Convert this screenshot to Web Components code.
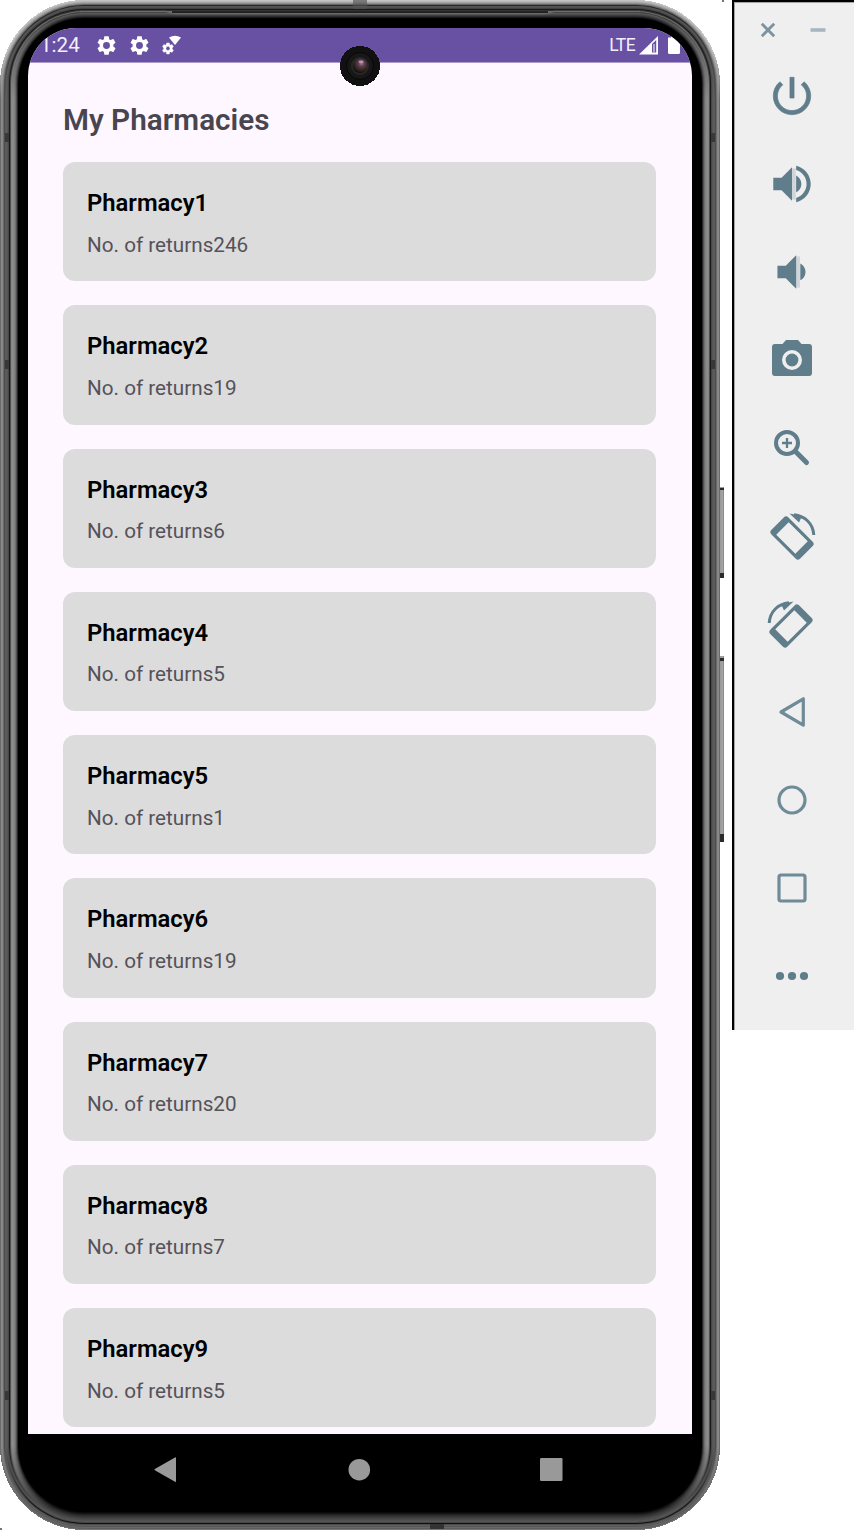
<!DOCTYPE html>
<html lang="en">
<head>
<meta charset="utf-8">
<title>My Pharmacies</title>
<style>
html,body{margin:0;background:#fff;height:1530px;overflow:hidden}
body{font-family:Roboto,"Liberation Sans",sans-serif}
</style>
</head>
<body>
<emulator-window></emulator-window>
<script>
class ShadowElement extends HTMLElement {
  connectedCallback() {
    if (!this.shadowRoot) this.attachShadow({mode: 'open'}).innerHTML = this.render();
  }
}

/* Metal rim: nested rounded rectangles from the outer edge to the black bezel. */
class DeviceFrame extends ShadowElement {
  render() {
    const bands = [
      [0,'#c4c4c4','#6c6c6c','#777777'], [1,'#b8b8b8','#8a8a8a','#5c5c5c'], [2,'#a4a4a4','#858585','#686868'],
      [3,'#8c8c8c','#6c6c6c','#555555'], [4,'#666666','#4c4c4c','#606060'], [5,'#262626','#5a5a5a','#4a4a4a'],
      [6,'#555555','#5c5c5c','#101010'], [7,'#505050','#555555','#454545'], [8,'#404040','#464646','#555555'],
      [9,'#191919','#1a1a1a','#505050'], [10,'#333333','#505050','#4a4a4a'], [11,'#6c6c6c','#858585','#444444'],
      [12,'#3a3a3a','#8c8c8c','#3c3c3c'], [13,'#585858','#898989','#343434'], [14,'#4c4c4c','#808080','#2c2c2c'],
      [15,'#3c3c3c','#707070','#202020'], [16,'#2c2c2c','#505050','#141414'], [17,'#181818','#282828','#080808'], [18,'#000','#000','#000']];
    let defs = '', rects = '';
    bands.forEach(([i,t,s,b]) => {
      const fade = i < 4 ? '.032' : '.012';
      defs += `<linearGradient id="g${i}" x1="0" y1="0" x2="0" y2="1530" gradientUnits="userSpaceOnUse"><stop offset="${fade}" stop-color="${t}"/><stop offset=".065" stop-color="${s}"/><stop offset=".945" stop-color="${s}"/><stop offset=".985" stop-color="${b}"/></linearGradient>`;
      rects += `<rect x="${i}" y="${i}" width="${720-2*i}" height="${1530-2*i}" rx="${84-i}" fill="url(#g${i})" ${i<1?'shape-rendering="crispEdges"':''}/>`;
    });
    const notch = (y) => `<path d="M5 ${y}h4v9h-4zM711 ${y}h4v9h-4z" fill="#383838"/>`;
    return `<style>:host{display:block;position:relative;width:728px;height:1530px;flex:none}
      svg{position:absolute;inset:0}.in{position:relative;padding:28px 36px 0 28px;height:1502px;box-sizing:border-box}</style>
      <svg width="728" height="1530"><defs>${defs}
      <linearGradient id="k" x1="0" y1="0" x2="1" y2="0"><stop offset="0" stop-color="#999"/><stop offset=".7" stop-color="#a5a5a5"/><stop offset="1" stop-color="#777"/></linearGradient></defs>
      ${rects}
      ${notch(133)}${notch(360)}${notch(1391)}
      <path d="M353 0h14v9h-14z" fill="#555" opacity=".65"/><path d="M430 1524h14v5h-14z" fill="#333"/>
      <path d="M80 11.5H166L175 13.5H545L554 11.5H640" stroke="#6a6a6a" stroke-width="1.4" fill="none"/>
      <path d="M172 12H548" stroke="#111" stroke-width="1.4"/>
      <path d="M720 487h4v91h-4z" fill="url(#k)"/><path d="M720 488h4v2h-4zM720 573h4v5h-4z" fill="#2b2b2b"/>
      <path d="M720 656h4v186h-4z" fill="url(#k)"/><path d="M720 658h4v3h-4zM720 834h4v8h-4z" fill="#2b2b2b"/>
      <path d="M722 0h2v2h-2zM0 1528h2v2h-2z" fill="#777"/>
      </svg><div class="in"><slot></slot></div>`;
  }
}

class StatusBar extends ShadowElement {
  render() {
    const gear = 'M19.14 12.94c.04-.3.06-.61.06-.94s-.02-.64-.07-.94l2.03-1.58c.18-.14.23-.41.12-.61l-1.92-3.32c-.12-.22-.37-.29-.59-.22l-2.39.96c-.5-.38-1.03-.7-1.62-.94L14.4 2.81c-.04-.24-.24-.41-.48-.41h-3.84c-.24 0-.43.17-.47.41L9.25 5.35c-.59.24-1.13.57-1.62.94l-2.39-.96c-.22-.08-.47 0-.59.22L2.74 8.87c-.12.21-.08.47.12.61l2.03 1.58c-.05.3-.09.63-.09.94s.02.64.07.94l-2.03 1.58c-.18.14-.23.41-.12.61l1.92 3.32c.12.22.37.29.59.22l2.39-.96c.5.38 1.03.7 1.62.94l.36 2.54c.05.24.24.41.48.41h3.84c.24 0 .44-.17.47-.41l.36-2.54c.59-.24 1.13-.56 1.62-.94l2.39.96c.22.08.47 0 .59-.22l1.92-3.32c.12-.22.07-.47-.12-.61zM12 15.6A3.6 3.6 0 1 1 12 8.4a3.6 3.6 0 0 1 0 7.2z';
    return `<style>:host{display:flex;align-items:center;height:34px;background:#6850a3;border-bottom:1px solid #ab9bcb;box-sizing:content-box;color:#f3effa}
      .t{font-size:20.6px;margin-left:12px;width:41px;white-space:nowrap}svg{display:block;fill:#fff}.g{margin-left:14px}.g+.g{margin-left:9.5px}.w{margin-left:10.5px}
      .l{margin-left:auto;font-size:17.5px;letter-spacing:-.6px;margin-right:4px}.b{margin-left:10px;margin-right:12px}</style>
      <span class="t">1:24</span>
      <svg class="g" width="23" height="23" viewBox="0 0 24 24"><path d="${gear}"/></svg>
      <svg class="g" width="23" height="23" viewBox="0 0 24 24"><path d="${gear}"/></svg>
      <svg class="w" width="21" height="21" viewBox="0 0 21 21"><path d="M8 2.5Q14-1 20 2.5L14 10Z"/><g transform="translate(0 6.5) scale(.58)"><path d="${gear}" stroke="#fff" stroke-width=".8"/></g></svg>
      <span class="l">LTE</span>
      <svg width="19" height="19" viewBox="0 0 19 19"><path fill-rule="evenodd" d="M0 18.5 19 0V18.5ZM13 8V16.5H17.2V4Z"/><path d="M14.2 8h1.6v8.5h-1.6z" fill="#c7bcdf"/></svg>
      <svg class="b" width="12" height="18" viewBox="0 0 12 18"><path d="M0 1.5H3V0H9V1.5H12V16.5Q12 18 10.5 18H1.5Q0 18 0 16.5Z"/></svg>`;
  }
}

class PharmacyCard extends ShadowElement {
  render() {
    return `<style>:host{display:block;box-sizing:border-box;height:119.25px;border-radius:12px;background:#dcdcdc;padding:26px 24px 0}
      h2{margin:0;font-size:23.8px;line-height:30px;font-weight:600;color:#000}
      p{margin:13.5px 0 0;font-size:20.7px;line-height:26px;color:#55525a}</style>
      <h2>${this.getAttribute('name')}</h2><p>No. of returns${this.getAttribute('returns')}</p>`;
  }
}

class PharmacyList extends ShadowElement {
  render() {
    const counts = [246, 19, 6, 5, 1, 19, 20, 7, 5];
    return `<style>:host{display:flex;flex-direction:column;flex:1;min-height:0;padding:37px 36px 0 35px;gap:24px;overflow:hidden}
      h1{margin:0 0 .1px;height:38px;line-height:40px;font-size:29.7px;font-weight:600;color:#49454f}
      pharmacy-card{flex:none}</style>
      <h1>My Pharmacies</h1>${counts.map((n,i)=>`<pharmacy-card name="Pharmacy${i+1}" returns="${n}"></pharmacy-card>`).join('')}`;
  }
}

class NavBar extends ShadowElement {
  render() {
    return `<style>:host{display:block;height:72px}svg{display:block;fill:#999}</style>
      <svg width="664" height="72" viewBox="28 1434 664 72"><path d="M154.8 1470.3Q154 1469.7 154.8 1469.1L175 1457.4Q176 1457 176 1458.3V1481Q176 1482.3 175 1481.7Z"/><circle cx="359.3" cy="1469.7" r="10.8"/><rect x="540" y="1458" width="22.5" height="23" rx="1.3"/></svg>`;
  }
}

class PhoneScreen extends ShadowElement {
  render() {
    return `<style>:host{display:block;position:relative}.s{height:1406px;display:flex;flex-direction:column;background:#fef7ff;border-radius:48px 48px 0 0;overflow:hidden}
      .cam{position:absolute;left:312px;top:18px}</style>
      <div class="s"><status-bar></status-bar><pharmacy-list></pharmacy-list></div><nav-bar></nav-bar>
      <svg class="cam" width="40" height="40" viewBox="0 0 40 40"><defs><radialGradient id="c" cx=".6" cy=".32" r=".65"><stop offset="0" stop-color="#a87c98"/><stop offset=".3" stop-color="#60405a"/><stop offset=".65" stop-color="#3a2a22"/><stop offset="1" stop-color="#161212"/></radialGradient></defs>
      <circle cx="20" cy="20" r="20" fill="#111" shape-rendering="crispEdges"/><circle cx="20" cy="20" r="13.5" fill="#171717" stroke="#070707"/><circle cx="20" cy="20" r="9" fill="#292929"/><circle cx="20" cy="20" r="7.3" fill="url(#c)"/><ellipse cx="21" cy="15.8" rx="2.5" ry="1.2" fill="#dcaecb" opacity=".7"/></svg>`;
  }
}

class ToolIcon extends ShadowElement {
  render() {
    const phone = '<g transform="translate(0 2)"><path transform="rotate(45)" fill-rule="evenodd" d="M-17-12H17Q20.3-12 20.3-9V9Q20.3 12 17 12H-17Q-20.3 12-20.3 9V-9Q-20.3-12-17-12ZM-13.5-8.8V8.8H13.5V-8.8Z"/><path d="M2-23.2C13-22 21-14.5 21.8-3" fill="none" stroke="#607d8b" stroke-width="3"/><path d="M-2.5-24.5 10-22 7-15.5Z"/></g>';
    const icons = {
      power: '<g transform="scale(2.08) translate(-12 -12)"><path stroke="#607d8b" stroke-width=".3" d="M13 3h-2v10h2V3zm4.83 2.17-1.42 1.42A6.92 6.92 0 0 1 19 12c0 3.87-3.13 7-7 7s-7-3.13-7-7c0-2.19 1.01-4.14 2.58-5.42L6.17 5.17A8.93 8.93 0 0 0 3 12a9 9 0 0 0 18 0c0-2.74-1.23-5.18-3.17-6.83z"/></g>',
      up: '<g transform="scale(2.08) translate(-12 -12)"><path d="M3 9v6h4l5 5V4L7 9H3zm13.5 3c0-1.77-1.02-3.29-2.5-4.03v8.05c1.48-.73 2.5-2.25 2.5-4.02zM14 3.23v2.06c2.89.86 5 3.54 5 6.71s-2.11 5.85-5 6.71v2.06c4.01-.91 7-4.49 7-8.77s-2.99-7.86-7-8.77z"/><path d="M12 4.5h1.8v15h-1.8z" opacity=".22"/></g>',
      down: '<g transform="scale(2.08) translate(-12 -12)"><path d="M18.5 12c0-1.77-1.02-3.29-2.5-4.03v8.05c1.48-.73 2.5-2.25 2.5-4.02zM5 9v6h4l5 5V4L9 9H5z"/><path d="M14 4.5h1.8v15h-1.8z" opacity=".22"/></g>',
      camera: '<path fill-rule="evenodd" d="M-6-20H6L9.5-16H17Q20-16 20-13V13Q20 16 17 16H-17Q-20 16-20 13V-13Q-20-16-17-16H-9.5ZM0-10A10 10 0 1 0 0 10A10 10 0 1 0 0-10Z"/><circle r="6.4"/>',
      zoom: '<g stroke="#607d8b" fill="none"><circle cx="-5" cy="-5" r="11" stroke-width="4"/><path d="M-10-5H0M-5-10V0" stroke-width="2.3"/><path d="M4 4 14.5 14.5" stroke-width="5" stroke-linecap="round"/></g>',
      left: phone, right: `<g transform="translate(-1 0) scale(-1 1)">${phone}</g>`,
      back: '<path d="M-11 0 11.3-13.2V13.2Z" fill="none" stroke="#6f8b98" stroke-width="3.2" stroke-linejoin="round"/>',
      home: '<circle r="13" fill="none" stroke="#6f8b98" stroke-width="3.2"/>',
      overview: '<rect x="-13" y="-13" width="26" height="26" rx="2" fill="none" stroke="#6f8b98" stroke-width="3.2"/>',
      more: '<circle cx="-12" r="4.1"/><circle r="4.1"/><circle cx="12" r="4.1"/>'
    };
    return `<style>:host{display:block;width:60px;height:60px}svg{display:block;fill:#607d8b}</style><svg width="60" height="60" viewBox="-30 -30 60 60">${icons[this.getAttribute('kind')]}</svg>`;
  }
}

class ToolPanel extends ShadowElement {
  render() {
    const kinds = ['power','up','down','camera','zoom','left','right','back','home','overview','more'];
    return `<style>:host{display:block;box-sizing:border-box;width:122px;height:1030px;margin-left:4px;background:#efefef;border-left:2px solid #000;border-top:2px solid #000;box-shadow:inset 1px 1px #a5a5a5}
      .w{display:flex;gap:34px;padding:20px 0 0 26px;height:44px;box-sizing:border-box}
      .w svg{display:block}.i{display:flex;flex-direction:column;gap:28px;padding:20px 0 0 28px}</style>
      <div class="w"><svg width="16" height="16" viewBox="0 0 16 16"><path d="M1.8 1.8 14.2 14.2M14.2 1.8 1.8 14.2" stroke="#7a939f" stroke-width="2.8"/></svg><svg width="16" height="16" viewBox="0 0 16 16"><path d="M.5 8H15.5" stroke="#a6b6be" stroke-width="3.6"/></svg></div>
      <div class="i">${kinds.map(k=>`<tool-icon kind="${k}"></tool-icon>`).join('')}</div>`;
  }
}

class EmulatorWindow extends ShadowElement {
  render() {
    return `<style>:host{display:flex;align-items:flex-start;width:854px;height:1530px}tool-panel{flex:none}</style>
      <device-frame><phone-screen></phone-screen></device-frame><tool-panel></tool-panel>`;
  }
}

customElements.define('tool-icon', ToolIcon);
customElements.define('tool-panel', ToolPanel);
customElements.define('status-bar', StatusBar);
customElements.define('pharmacy-card', PharmacyCard);
customElements.define('pharmacy-list', PharmacyList);
customElements.define('nav-bar', NavBar);
customElements.define('phone-screen', PhoneScreen);
customElements.define('device-frame', DeviceFrame);
customElements.define('emulator-window', EmulatorWindow);
</script>
</body>
</html>
